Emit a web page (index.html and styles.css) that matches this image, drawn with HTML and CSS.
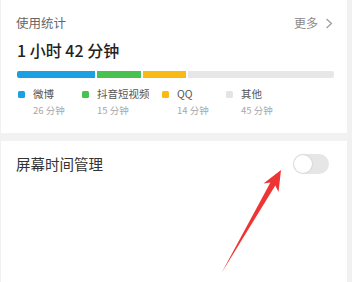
FILE: index.html
```html
<!DOCTYPE html>
<html lang="zh">
<head>
<meta charset="utf-8">
<link rel="stylesheet" href="styles.css">
</head>
<body>
<div class="page">
  <section class="card usage">
    <div class="head">
      <span class="title">使用统计</span>
      <span class="more">更多<svg class="chev" width="8" height="11" viewBox="0 0 8 11"><path d="M1.5 1 L6.5 5.5 L1.5 10" fill="none" stroke="#9a9a9a" stroke-width="1.2"/></svg></span>
    </div>
    <div class="total">1 小时 42 分钟</div>
    <div class="bar">
      <span class="seg blue" style="width:78px"></span>
      <span class="seg green" style="width:44px"></span>
      <span class="seg yellow" style="width:43px"></span>
      <span class="seg rest"></span>
    </div>
    <div class="legend">
      <div class="item"><span class="dot blue"></span><div><div class="lab">微博</div><div class="sub">26 分钟</div></div></div>
      <div class="item"><span class="dot green"></span><div><div class="lab">抖音短视频</div><div class="sub">15 分钟</div></div></div>
      <div class="item"><span class="dot yellow"></span><div><div class="lab">QQ</div><div class="sub">14 分钟</div></div></div>
      <div class="item"><span class="dot rest"></span><div><div class="lab">其他</div><div class="sub">45 分钟</div></div></div>
    </div>
  </section>
  <div class="band"></div>
  <section class="card manage">
    <span class="mtitle">屏幕时间管理</span>
    <span class="toggle"><span class="knob"></span></span>
  </section>
</div>
<svg class="arrow" width="352" height="282" viewBox="0 0 352 282">
  <polygon points="281,170 278.5,192 275.3,185.6 221.5,273 270.4,182.6 263.5,183.5" fill="#ef3434"/>
</svg>
</body>
</html>
```
FILE: styles.css
```css
html, body {
  margin: 0;
  padding: 0;
}
body {
  background: #f1f1f1;
  font-family: "Noto Sans CJK SC", "Noto Sans", sans-serif;
  width: 352px;
  height: 282px;
  overflow: hidden;
  position: relative;
}
.page {
  margin-left: 1px;
  width: 346px;
  height: 282px;
  background: #f2f2f2;
  display: flex;
  flex-direction: column;
}
.card {
  background: #fff;
}
.usage {
  height: 133px;
  box-sizing: border-box;
  padding: 14px 13px 0 15px;
}
.head {
  display: flex;
  justify-content: space-between;
  align-items: center;
  height: 18px;
  padding-right: 1px;
}
.title {
  font-size: 12.5px;
  color: #666;
  line-height: 18px;
}
.more {
  font-size: 12px;
  color: #8a8a8a;
  line-height: 18px;
  display: flex;
  align-items: center;
}
.chev {
  margin-left: 7px;
}
.total {
  margin-top: 7px;
  font-size: 16px;
  line-height: 22px;
  font-weight: 500;
  color: #222;
  padding-left: 1px;
}
.bar {
  margin-top: 10px;
  height: 7px;
  display: flex;
  gap: 2px;
  border-radius: 2px;
  overflow: hidden;
  margin-left: 1px;
}
.seg {
  display: block;
  height: 100%;
}
.seg.rest {
  flex: 1;
}
.blue { background: #1ba0e1; }
.green { background: #47c24f; }
.yellow { background: #f9bb13; }
.rest { background: #e7e7e7; }
.legend {
  margin-top: 9px;
  display: grid;
  grid-template-columns: 64px 80px 64px auto;
  padding-left: 2px;
}
.item {
  display: flex;
  align-items: flex-start;
}
.dot {
  width: 7px;
  height: 7px;
  border-radius: 1.5px;
  margin-top: 3.5px;
  margin-right: 8px;
  flex: none;
}
.dot.rest {
  background: #e4e4e4;
}
.lab {
  font-size: 10.5px;
  line-height: 14px;
  color: #555;
}
.sub {
  margin-top: 2px;
  font-size: 9.5px;
  line-height: 14px;
  color: #a8a8a8;
}
.band {
  height: 8px;
}
.manage {
  flex: 1;
  display: flex;
  justify-content: space-between;
  align-items: flex-start;
  padding: 13px 18px 0 15px;
}
.mtitle {
  font-size: 14.5px;
  line-height: 20px;
  color: #333;
}
.toggle {
  width: 36px;
  height: 20px;
  border-radius: 10px;
  background: #e6e6e6;
  position: relative;
  display: block;
}
.knob {
  position: absolute;
  left: 1px;
  top: 1px;
  width: 18px;
  height: 18px;
  border-radius: 50%;
  background: #fff;
  box-shadow: 0 0 2px rgba(0,0,0,0.18);
}
.arrow {
  position: absolute;
  left: 0;
  top: 0;
}
```
